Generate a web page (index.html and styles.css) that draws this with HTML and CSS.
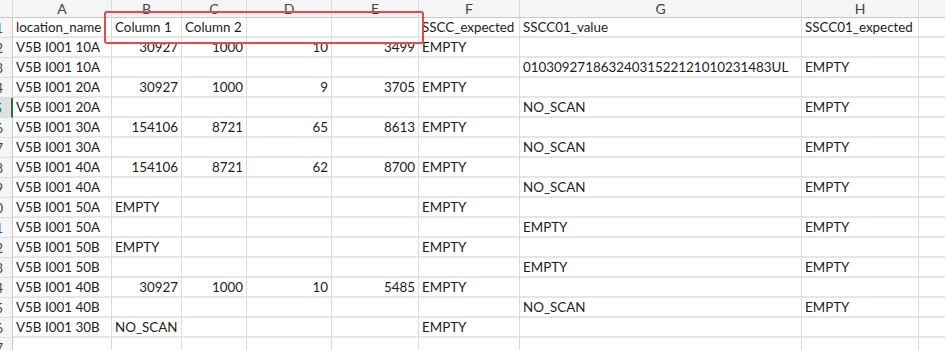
FILE: index.html
```html
<!DOCTYPE html>
<html>
<head>
<meta charset="utf-8">
<link rel="stylesheet" href="styles.css">
</head>
<body>
<div class="wrap">
  <div class="sheet">
    <div class="ch corner"></div><div class="ch">A</div><div class="ch">B</div><div class="ch">C</div><div class="ch">D</div><div class="ch">E</div><div class="ch">F</div><div class="ch">G</div><div class="ch">H</div><div class="ch"></div>

    <div class="rh">1</div><div class="c">location_name</div><div class="c">Column 1</div><div class="c">Column 2</div><div class="c"></div><div class="c"></div><div class="c">SSCC_expected</div><div class="c">SSCC01_value</div><div class="c">SSCC01_expected</div><div class="c"></div>

    <div class="rh">2</div><div class="c">V5B I001 10A</div><div class="c n">30927</div><div class="c n">1000</div><div class="c n">10</div><div class="c n">3499</div><div class="c">EMPTY</div><div class="c"></div><div class="c"></div><div class="c"></div>

    <div class="rh">3</div><div class="c">V5B I001 10A</div><div class="c"></div><div class="c"></div><div class="c"></div><div class="c"></div><div class="c"></div><div class="c">01030927186324031522121010231483UL</div><div class="c">EMPTY</div><div class="c"></div>

    <div class="rh">4</div><div class="c">V5B I001 20A</div><div class="c n">30927</div><div class="c n">1000</div><div class="c n">9</div><div class="c n">3705</div><div class="c">EMPTY</div><div class="c"></div><div class="c"></div><div class="c"></div>

    <div class="rh sel">5</div><div class="c">V5B I001 20A</div><div class="c"></div><div class="c"></div><div class="c"></div><div class="c"></div><div class="c"></div><div class="c">NO_SCAN</div><div class="c">EMPTY</div><div class="c"></div>

    <div class="rh">6</div><div class="c">V5B I001 30A</div><div class="c n">154106</div><div class="c n">8721</div><div class="c n">65</div><div class="c n">8613</div><div class="c">EMPTY</div><div class="c"></div><div class="c"></div><div class="c"></div>

    <div class="rh">7</div><div class="c">V5B I001 30A</div><div class="c"></div><div class="c"></div><div class="c"></div><div class="c"></div><div class="c"></div><div class="c">NO_SCAN</div><div class="c">EMPTY</div><div class="c"></div>

    <div class="rh">8</div><div class="c">V5B I001 40A</div><div class="c n">154106</div><div class="c n">8721</div><div class="c n">62</div><div class="c n">8700</div><div class="c">EMPTY</div><div class="c"></div><div class="c"></div><div class="c"></div>

    <div class="rh">9</div><div class="c">V5B I001 40A</div><div class="c"></div><div class="c"></div><div class="c"></div><div class="c"></div><div class="c"></div><div class="c">NO_SCAN</div><div class="c">EMPTY</div><div class="c"></div>

    <div class="rh">10</div><div class="c">V5B I001 50A</div><div class="c">EMPTY</div><div class="c"></div><div class="c"></div><div class="c"></div><div class="c">EMPTY</div><div class="c"></div><div class="c"></div><div class="c"></div>

    <div class="rh">11</div><div class="c">V5B I001 50A</div><div class="c"></div><div class="c"></div><div class="c"></div><div class="c"></div><div class="c"></div><div class="c">EMPTY</div><div class="c">EMPTY</div><div class="c"></div>

    <div class="rh">12</div><div class="c">V5B I001 50B</div><div class="c">EMPTY</div><div class="c"></div><div class="c"></div><div class="c"></div><div class="c">EMPTY</div><div class="c"></div><div class="c"></div><div class="c"></div>

    <div class="rh">13</div><div class="c">V5B I001 50B</div><div class="c"></div><div class="c"></div><div class="c"></div><div class="c"></div><div class="c"></div><div class="c">EMPTY</div><div class="c">EMPTY</div><div class="c"></div>

    <div class="rh">14</div><div class="c">V5B I001 40B</div><div class="c n">30927</div><div class="c n">1000</div><div class="c n">10</div><div class="c n">5485</div><div class="c">EMPTY</div><div class="c"></div><div class="c"></div><div class="c"></div>

    <div class="rh">15</div><div class="c">V5B I001 40B</div><div class="c"></div><div class="c"></div><div class="c"></div><div class="c"></div><div class="c"></div><div class="c">NO_SCAN</div><div class="c">EMPTY</div><div class="c"></div>

    <div class="rh">16</div><div class="c">V5B I001 30B</div><div class="c">NO_SCAN</div><div class="c"></div><div class="c"></div><div class="c"></div><div class="c">EMPTY</div><div class="c"></div><div class="c"></div><div class="c"></div>

    <div class="rh">17</div><div class="c"></div><div class="c"></div><div class="c"></div><div class="c"></div><div class="c"></div><div class="c"></div><div class="c"></div><div class="c"></div><div class="c"></div>
  </div>
  <div class="annot"></div>
</div>
</body>
</html>
```

FILE: styles.css
```css
html, body {
  margin: 0;
  padding: 0;
  background: #ffffff;
  overflow: hidden;
}
.wrap {
  position: relative;
  width: 945px;
  height: 350px;
  overflow: hidden;
}
.sheet {
  display: grid;
  grid-template-columns: 30px 99px 70px 65px 85px 87px 101px 282px 117px 80px;
  grid-template-rows: 18px;
  grid-auto-rows: 20px;
  margin-left: -17px;
  font-family: Lato, "Liberation Sans", sans-serif;
  font-size: 13.4px;
  color: #1c1c1c;
}
.ch {
  box-sizing: border-box;
  background: #f5f5f5;
  border-right: 1px solid #d9d9d9;
  border-bottom: 1px solid #c9c9c9;
  color: #444444;
  text-align: center;
  line-height: 17px;
  font-size: 14px;
}
.corner {
  background: #f5f5f5;
}
.rh {
  box-sizing: border-box;
  background: #f5f5f5;
  border-right: 1px solid #c9c9c9;
  border-bottom: 1px solid #dcdcdc;
  color: #444444;
  text-align: right;
  padding-right: 9px;
  line-height: 20px;
  font-size: 13px;
}
.rh.sel {
  background: #e1e1e1;
  color: #217346;
  border-right: 2px solid #217346;
}
.c {
  box-sizing: border-box;
  border-right: 1px solid #dcdcdc;
  border-bottom: 2px solid #e6e6e6;
  padding: 0 3px;
  line-height: 19px;
  white-space: nowrap;
  overflow: visible;
}
.c.n {
  text-align: right;
}
.annot {
  position: absolute;
  left: 104px;
  top: 11px;
  width: 320px;
  height: 33px;
  box-sizing: border-box;
  border: 2px solid #e5484d;
  border-radius: 3px;
  pointer-events: none;
}
```
